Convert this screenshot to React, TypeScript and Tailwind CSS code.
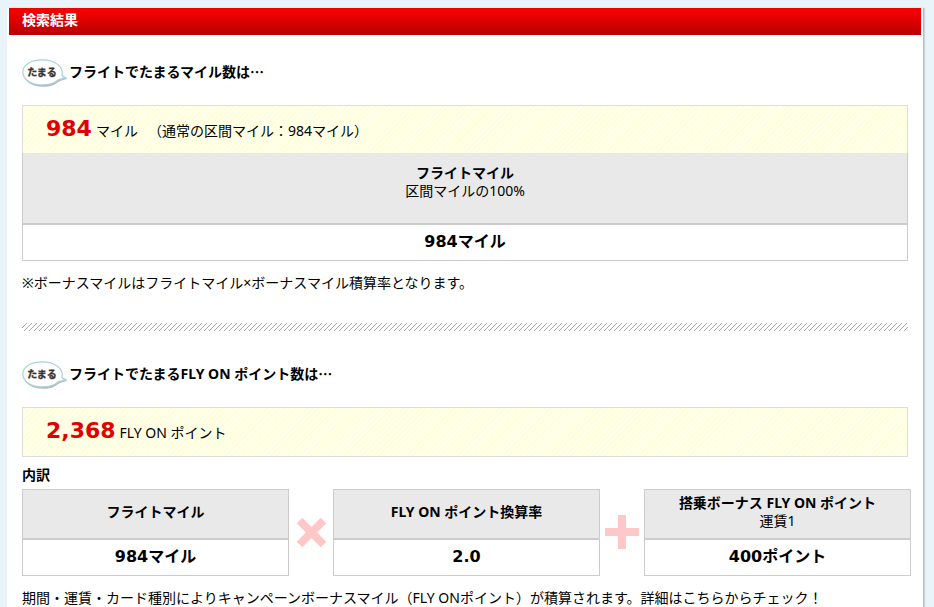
import type { ReactNode } from "react";

interface ResultTableProps {
  title: string;
  note?: string;
  value: string;
  tall?: boolean;
}

function ResultTable({ title, note, value, tall }: ResultTableProps) {
  return (
    <table className={`w-full border-collapse text-center ${tall ? "border-x border-b" : "border"} border-[#ccc]`}>
      <thead>
        <tr>
          <th
            className={`bg-[#e9e9e9] border-b-2 border-[#ccc] font-normal leading-[18px] ${
              tall ? "h-[71px] pt-[11px] align-top" : "h-[50px] pb-1 align-middle"
            }`}
          >
            <strong className="block font-bold">{title}</strong>
            {note}
          </th>
        </tr>
      </thead>
      <tbody>
        <tr>
          <td className="h-9 pb-px align-middle font-[DejaVu_Sans,Noto_Sans_CJK_JP,sans-serif] text-base leading-5 font-bold">
            {value}
          </td>
        </tr>
      </tbody>
    </table>
  );
}

function Balloon() {
  return (
    <svg viewBox="0 0 46 28" className="h-7 w-[46px] shrink-0" role="img" aria-label="たまる">
      <path
        d="M21 2C9.500 2 1.500 7 1.500 14.500s8 13.300 19.500 13.300c7 0 12.500-2 15.500-5 3-1.500 6-2 9-3-2-.5-4.500-1-5.500-2.500.5-8-7-15.300-19-15.300Z"
        fill="#888"
        opacity=".6"
      />
      <path
        d="M20.500.8C9 .8.800 5.800.800 13s8 12.900 19.700 12.900c7 0 12.500-2 15.500-5 3-1 5.500-1.500 8.500-2-2-.3-4-1-4.500-2.900C42 8 33 .8 20.500.8Z"
        fill="#fff"
        stroke="#a9d0de"
        strokeWidth="1.200"
      />
      <text
        x="20"
        y="16.500"
        textAnchor="middle"
        fontSize="10"
        fontWeight="700"
        fill="#333"
        stroke="#333"
        strokeWidth=".3"
        fontFamily="Noto Sans CJK JP, sans-serif"
      >
        たまる
      </text>
    </svg>
  );
}

function SectionTitle({ children }: { children: ReactNode }) {
  return (
    <h3 className="flex items-center gap-px font-bold">
      <Balloon />
      <span className="pb-0.5">
        {children}
        <span className="font-[Noto_Sans_CJK_JP,sans-serif] leading-none">…</span>
      </span>
    </h3>
  );
}

function Score({ value, children, open }: { value: string; children: ReactNode; open?: boolean }) {
  return (
    <p
      className={`flex items-baseline gap-1 border-x border-t border-[#ddd] bg-[repeating-linear-gradient(135deg,#ffffdc_0px,#ffffdc_2px,#fffff2_3px,#fffff2_4px)] px-[23px] pt-2 ${
        open ? "h-12" : "h-[50px] border-b"
      }`}
    >
      <strong className="font-[DejaVu_Sans,sans-serif] text-[22px] leading-[30px] font-bold text-[#e00000]">{value}</strong>
      {children}
    </p>
  );
}

function Hatch() {
  return (
    <svg className="h-2 w-full" aria-hidden="true">
      <defs>
        <pattern id="hatch" width="5" height="5" patternUnits="userSpaceOnUse">
          <path d="M0 4h1v1H0zM1 3h1v1H1zM2 2h1v1H2zM3 1h1v1H3zM4 0h1v1H4z" fill="#aaa" shapeRendering="crispEdges" />
        </pattern>
      </defs>
      <rect width="100%" height="8" fill="url(#hatch)" />
    </svg>
  );
}

export default function App() {
  return (
    <div className="min-h-screen bg-[#e8f3fa] pt-2 pr-2.5 pl-[7px] font-[Noto_Sans,Noto_Sans_CJK_JP,sans-serif] text-sm leading-5 text-black">
      <main className="border-r border-[#b5bcc0] bg-white shadow-[1px_0_1px_#ccd6dc]">
        <h2 className="mr-0.5 ml-0.5 h-[27px] bg-linear-to-b from-[#f00000] from-20% to-[#b80000] pl-[13px] leading-6 font-bold text-white">
          検索結果
        </h2>

        <div className="pt-6 pr-3 pl-[15px]">
          <section className="mr-[3px]">
            <SectionTitle>フライトでたまるマイル数は</SectionTitle>
            <div className="mt-[18px]">
              <Score value="984" open>
                <span>マイル</span>
                <span className="ml-1.5">（通常の区間マイル：984マイル）</span>
              </Score>
              <ResultTable title="フライトマイル" note="区間マイルの100%" value="984マイル" tall />
            </div>
            <p className="mt-3">※ボーナスマイルはフライトマイル×ボーナスマイル積算率となります。</p>
            <div className="mt-[30px]">
              <Hatch />
            </div>
          </section>

          <section className="pt-[30px]">
            <SectionTitle>フライトでたまるFLY ON ポイント数は</SectionTitle>
            <div className="mt-[18px] mr-[3px]">
              <Score value="2,368">
                <span>FLY ON ポイント</span>
              </Score>
            </div>

            <h4 className="mt-2 mb-1 font-bold">内訳</h4>
            <div className="flex items-center">
              <div className="flex-1">
                <ResultTable title="フライトマイル" value="984マイル" />
              </div>
              <svg viewBox="0 0 44 44" className="size-11 shrink-0" role="img" aria-label="×">
                <path d="M10.500 10.500l24 24M34.500 10.500l-24 24" stroke="#ffc8c8" strokeWidth="8" />
              </svg>
              <div className="flex-1">
                <ResultTable title="FLY ON ポイント換算率" value="2.0" />
              </div>
              <svg viewBox="0 0 44 44" className="size-11 shrink-0" role="img" aria-label="+">
                <path d="M5 22h34M22 5v34" stroke="#ffc8c8" strokeWidth="8" />
              </svg>
              <div className="flex-1">
                <ResultTable title="搭乗ボーナス FLY ON ポイント" note="運賃1" value="400ポイント" />
              </div>
            </div>
            <p className="mt-3">
              期間・運賃・カード種別によりキャンペーンボーナスマイル（FLY ONポイント）が積算されます。詳細はこちらからチェック！
            </p>
          </section>
        </div>
      </main>
    </div>
  );
}
